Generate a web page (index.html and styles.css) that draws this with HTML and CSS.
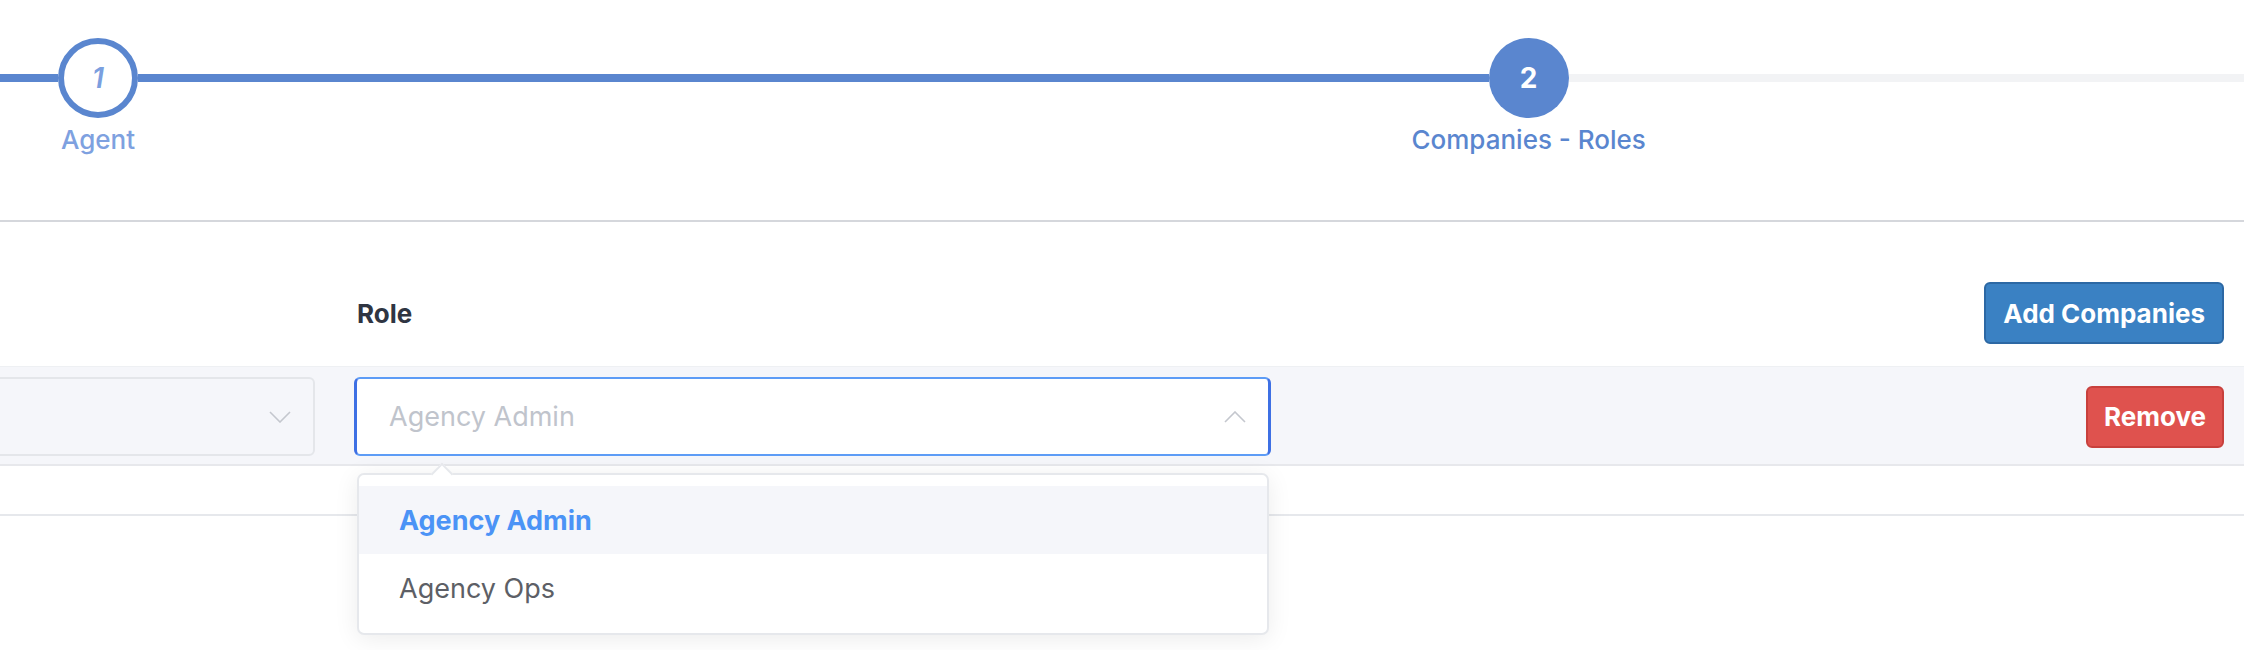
FILE: index.html
```
<!DOCTYPE html>
<html>
<head>
<meta charset="utf-8">
<link rel="stylesheet" href="styles.css">
</head>
<body>
<div class="page">
  <div class="stepper">
    <div class="seg seg-lead done"></div>
    <div class="step">
      <div class="circle circle-done">1</div>
      <div class="label label-done">Agent</div>
    </div>
    <div class="seg seg-main done"></div>
    <div class="step">
      <div class="circle circle-active">2</div>
      <div class="label label-active">Companies - Roles</div>
    </div>
    <div class="seg seg-tail todo"></div>
  </div>

  <div class="form">
    <div class="grid head">
      <div class="hcell"></div>
      <div class="hcell">Role</div>
      <div class="actions"><button class="btn btn-primary">Add Companies</button></div>
    </div>
    <div class="grid row">
      <div class="select select-muted">
        <span class="value"></span>
        <svg class="chev" width="22" height="12" viewBox="0 0 22 12"><path d="M1 1 L11 11 L21 1" fill="none" stroke="#c4c7ce" stroke-width="1.6"/></svg>
      </div>
      <div class="cell-rel">
        <div class="select select-focus">
          <span class="placeholder">Agency Admin</span>
          <svg class="chev" width="22" height="12" viewBox="0 0 22 12"><path d="M1 11 L11 1 L21 11" fill="none" stroke="#c4c7ce" stroke-width="1.6"/></svg>
        </div>
        <div class="dropdown">
          <div class="arrow"></div>
          <ul class="options">
            <li class="opt opt-hover">Agency Admin</li>
            <li class="opt">Agency Ops</li>
          </ul>
        </div>
      </div>
      <div class="actions"><button class="btn btn-danger">Remove</button></div>
    </div>
    <div class="bottom-line"></div>
  </div>
</div>
</body>
</html>
```

FILE: styles.css
```
* { box-sizing: border-box; }
html, body { margin: 0; padding: 0; background: #fff; }
body {
  font-family: Inter, "Noto Sans", "Liberation Sans", sans-serif;
  width: 2254px;
  height: 650px;
  overflow: hidden;
}
.page { padding-right: 10px; }

/* stepper */
.stepper {
  display: flex;
  align-items: flex-start;
  padding-top: 38px;
  height: 222px;
  border-bottom: 2px solid #d5d7dc;
}
.seg { height: 8px; margin-top: 36px; }
.seg.done { background: #5a86cf; }
.seg.todo { background: #f2f3f5; }
.seg-lead { width: 58px; flex: none; }
.seg-main { flex: 2; }
.seg-tail { flex: 1; }
.step {
  width: 80px;
  flex: none;
  display: flex;
  flex-direction: column;
  align-items: center;
}
.circle {
  width: 80px;
  height: 80px;
  border-radius: 50%;
  display: flex;
  align-items: center;
  justify-content: center;
  font-size: 28px;
}
.circle-done {
  border: 6px solid #5a86cf;
  background: #fff;
  color: #7b9fdf;
  font-style: italic;
  font-weight: 600;
}
.circle-active {
  background: #5a86cf;
  color: #fff;
  font-weight: 700;
}
.label {
  margin-top: 7px;
  font-size: 26px;
  line-height: 30px;
  font-weight: 500;
  white-space: nowrap;
}
.label-done { color: #7ea1e0; }
.label-active { color: #5a86cf; }

/* form */
.form { padding-top: 60px; }
.grid {
  display: grid;
  grid-template-columns: 917px 917px 1fr;
  column-gap: 39px;
  margin-left: -602px;
  align-items: center;
}
.head { height: 62px; padding-right: 20px; }
.hcell {
  font-size: 26px;
  font-weight: 700;
  color: #2f3542;
  padding-left: 3px;
}
.actions { display: flex; justify-content: flex-end; }
.btn {
  font-family: Inter, "Noto Sans", "Liberation Sans", sans-serif;
  font-size: 26px;
  font-weight: 700;
  color: #fff;
  height: 62px;
  padding: 0 17px;
  border-radius: 6px;
  border: 2px solid;
  cursor: pointer;
}
.btn-primary { background: #3a81c3; border-color: #2c68a4; }
.btn-danger { background: #df524e; border-color: #c8403c; padding: 0 16px; }

.row {
  margin-top: 22px;
  background: #f5f6fa;
  border-top: 1px solid #eef0f3;
  border-bottom: 2px solid #e7e8ec;
  padding: 10px 20px 8px 0;
}
.select {
  height: 79px;
  border-radius: 6px;
  display: flex;
  align-items: center;
  justify-content: space-between;
  padding: 0 22px 0 32px;
  font-size: 27px;
}
.select-muted {
  background: #f5f6fa;
  border: 2px solid #e4e6ea;
}
.select-focus {
  background: #fff;
  border: 2px solid #5d9cf6;
  border-left: 3px solid #3e70e4;
  border-right: 3px solid #3e70e4;
}
.placeholder { color: #c0c4cc; }
.chev { display: block; }

.cell-rel { position: relative; }
.dropdown {
  position: absolute;
  left: 3px;
  top: calc(100% + 17px);
  width: 912px;
  background: #fff;
  border: 2px solid #e6e8ec;
  border-radius: 7px;
  box-shadow: 0 4px 24px rgba(0, 0, 0, 0.08);
  z-index: 10;
}
.arrow {
  position: absolute;
  top: -9px;
  left: 75px;
  width: 16px;
  height: 16px;
  background: #fff;
  border-top: 2px solid #e6e8ec;
  border-left: 2px solid #e6e8ec;
  transform: rotate(45deg);
}
.options {
  list-style: none;
  margin: 0;
  padding: 11px 0 11px;
}
.opt {
  height: 68px;
  display: flex;
  align-items: center;
  padding-left: 40px;
  font-size: 27px;
  color: #5d5f66;
}
.opt-hover {
  background: #f5f6fa;
  color: #4b93f6;
  font-weight: 700;
}
.bottom-line {
  margin-top: 48px;
  height: 2px;
  background: #e6e8ec;
}
```
